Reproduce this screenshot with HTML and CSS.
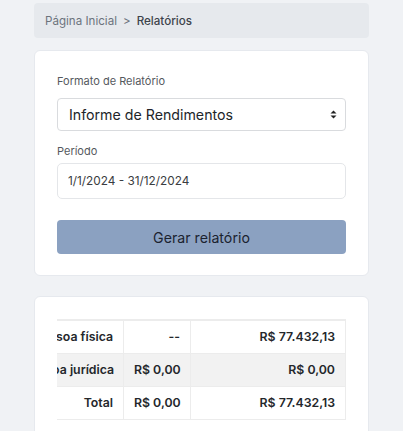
FILE: index.html
```html
<!DOCTYPE html>
<html lang="pt-BR">
<head>
<meta charset="utf-8">
<title>Relatórios</title>
<link rel="stylesheet" href="styles.css">
</head>
<body>
<div class="page">
  <nav class="breadcrumb">
    <span class="crumb">Página Inicial</span>
    <span class="sep">&gt;</span>
    <span class="crumb current">Relatórios</span>
  </nav>

  <section class="card form-card">
    <div class="field">
      <label class="label">Formato de Relatório</label>
      <div class="select">
        <span class="select-value">Informe de Rendimentos</span>
        <svg class="select-arrows" width="7" height="9" viewBox="0 0 7 9" aria-hidden="true">
          <path d="M3.5 0.5 L6.5 3.6 H0.5 Z" fill="#222"/>
          <path d="M3.5 8.5 L6.5 5.4 H0.5 Z" fill="#222"/>
        </svg>
      </div>
    </div>
    <div class="field">
      <label class="label">Período</label>
      <div class="input">1/1/2024 - 31/12/2024</div>
    </div>
    <button class="btn" type="button">Gerar relatório</button>
  </section>

  <section class="card table-card">
    <div class="table-scroll">
      <table class="report">
        <colgroup>
          <col class="c1">
          <col class="c2">
          <col class="c3">
        </colgroup>
        <tbody>
          <tr>
            <td>Pessoa física</td>
            <td>--</td>
            <td>R$ 77.432,13</td>
          </tr>
          <tr class="striped">
            <td>Pessoa jurídica</td>
            <td>R$ 0,00</td>
            <td>R$ 0,00</td>
          </tr>
          <tr>
            <td>Total</td>
            <td>R$ 0,00</td>
            <td>R$ 77.432,13</td>
          </tr>
        </tbody>
      </table>
    </div>
  </section>
</div>
</body>
</html>
```

FILE: styles.css
```css
* { box-sizing: border-box; }

html, body {
  margin: 0;
  padding: 0;
  background: #f0f2f5;
  font-family: Inter, "Noto Sans", sans-serif;
  color: #222;
}

.page {
  padding: 3px 34px 0;
  display: flex;
  flex-direction: column;
  gap: 12px;
}

.breadcrumb {
  height: 35px;
  background: #e6e9ed;
  border-radius: 4px;
  padding: 0 11px;
  display: flex;
  align-items: center;
  gap: 6px;
  font-size: 11.6px;
  color: #6c737c;
}

.breadcrumb .current {
  color: #3d434b;
  font-weight: 500;
}

.card {
  background: #fff;
  border: 1px solid #e6e9ee;
  border-radius: 6px;
}

.form-card {
  padding: 22px 22px 21px;
  display: flex;
  flex-direction: column;
}

.field {
  display: flex;
  flex-direction: column;
}

.field + .field { margin-top: 12px; }

.label {
  font-size: 11px;
  line-height: 16px;
  color: #55595e;
  margin-bottom: 4px;
}

.select {
  margin-top: 5px;
  height: 33px;
  border: 1px solid #d9dbde;
  border-radius: 4px;
  padding: 0 8px 0 11px;
  display: flex;
  align-items: center;
  justify-content: space-between;
  font-size: 14.2px;
  color: #212529;
}

.select-arrows { display: block; }

.input {
  height: 36px;
  border: 1px solid #e4e6e9;
  border-radius: 5px;
  padding: 0 10px;
  display: flex;
  align-items: center;
  font-size: 11.8px;
  color: #3a3d41;
}

.btn {
  margin-top: 21px;
  height: 34px;
  border: 0;
  border-radius: 4px;
  background: #8ba1c1;
  color: #1b2330;
  font-family: inherit;
  font-size: 14.2px;
}

.table-card {
  padding: 22px 22px 12px;
  margin-top: 8px;
  min-height: 160px;
}

.table-scroll {
  overflow-x: auto;
  direction: rtl;
  scrollbar-width: none;
}

.report {
  direction: ltr;
  table-layout: fixed;
  width: 332px;
  border-collapse: collapse;
  font-size: 12.3px;
  font-weight: 600;
  color: #24272b;
  white-space: nowrap;
  border-top: 2px solid #ececec;
}

.report col.c1 { width: 110px; }
.report col.c2 { width: 67px; }
.report col.c3 { width: 155px; }

.report td {
  height: 33px;
  padding: 0 10px;
  text-align: right;
  border-bottom: 1px solid #ececec;
  border-right: 1px solid #ececec;
}

.report tr.striped td { background: #f2f2f2; }
```
